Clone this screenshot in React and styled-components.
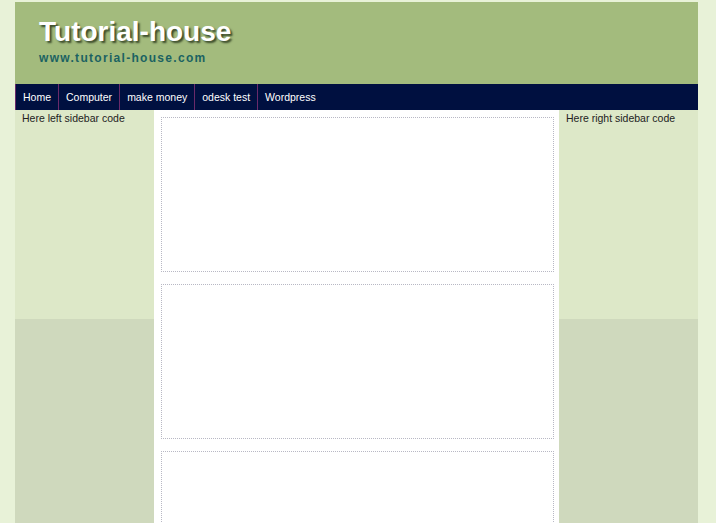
import React from 'react';
import styled, { createGlobalStyle } from 'styled-components';

const GlobalStyle = createGlobalStyle`
  html, body {
    margin: 0;
    padding: 0;
    background: #e8f2d8;
    font-family: "Liberation Sans", Arial, sans-serif;
  }
`;

const Page = styled.div`
  width: 683px;
  margin: 2px 0 0 15px;
  background: #cfd9bd;
`;

const Header = styled.div`
  height: 82px;
  background: #a3bb7d;
  padding: 15px 0 0 24px;
  box-sizing: border-box;
`;

const Title = styled.h1`
  margin: 0;
  font-size: 28px;
  font-weight: bold;
  color: #ffffff;
  line-height: 30px;
  text-shadow: 2px 2px 2px #3a4a2a;
`;

const SubTitle = styled.div`
  margin-top: 4px;
  font-size: 12px;
  font-weight: bold;
  letter-spacing: 1.3px;
  color: #1b6262;
`;

const Nav = styled.ul`
  display: flex;
  margin: 0;
  padding: 0;
  list-style: none;
  height: 26px;
  background: #001040;
`;

const NavItem = styled.li`
  display: flex;
  align-items: center;
  padding: 0 7px;
  border-left: 1px solid #6a2a6a;
  color: #ffffff;
  font-size: 10.5px;
`;

const Body = styled.div`
  display: flex;
  align-items: flex-start;
`;

const Sidebar = styled.div`
  width: 139px;
  min-height: 209px;
  box-sizing: border-box;
  background: #dde8c8;
  padding: 2px 7px;
  font-size: 10.5px;
  color: #222222;
`;

const Content = styled.div`
  width: 405px;
  background: #ffffff;
  padding: 7px 5px 0 7px;
  box-sizing: border-box;
  display: flex;
  flex-direction: column;
  gap: 12px;
`;

const Post = styled.div`
  height: 155px;
  box-sizing: border-box;
  border: 1px dotted #b8b8c4;
  flex-shrink: 0;
`;

const menu = ['Home', 'Computer', 'make money', 'odesk test', 'Wordpress'];

export default function App() {
  return (
    <>
      <GlobalStyle />
      <Page>
        <Header>
          <Title>Tutorial-house</Title>
          <SubTitle>www.tutorial-house.com</SubTitle>
        </Header>
        <Nav>
          {menu.map((m) => (
            <NavItem key={m}>{m}</NavItem>
          ))}
        </Nav>
        <Body>
          <Sidebar>Here left sidebar code</Sidebar>
          <Content>
            <Post />
            <Post />
            <Post />
          </Content>
          <Sidebar>Here right sidebar code</Sidebar>
        </Body>
      </Page>
    </>
  );
}
